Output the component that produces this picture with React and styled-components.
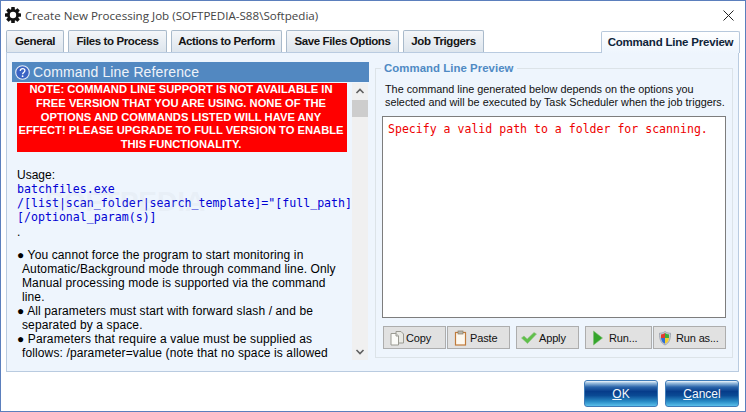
import React from "react";
import styled, { createGlobalStyle } from "styled-components";

const Global = createGlobalStyle`
  html, body { margin: 0; padding: 0; background: #fff; }
  * { box-sizing: border-box; }
`;
const Win = styled.div`
  width: 746px; height: 412px; border: 1px solid #5b7fbd; background: #fff;
  display: flex; flex-direction: column; overflow: hidden;
  font-family: "Liberation Sans", Arial, sans-serif; color: #000;
`;
const TitleBar = styled.div`
  height: 30px; flex: none; display: flex; align-items: center; padding: 0 11px 2px 4px;
`;
const AppIcon = styled.svg` width: 16px; height: 16px; flex: none; `;
const Title = styled.div`
  margin-left: 4px; flex: 1; font: 11.6px "Open Sans", sans-serif; color: #444; white-space: nowrap;
`;
const Close = styled.svg` width: 11px; height: 11px; flex: none; `;
const Tabs = styled.div`
  height: 21px; flex: none; display: flex; align-items: flex-end; padding: 0 5px 0 5px; gap: 4px; position: relative; z-index: 1;
`;
const Tab = styled.div`
  height: 22px; width: ${p => p.$w}px; flex: none; text-align: center; line-height: 20px;
  font-size: 11.5px; font-weight: 700; color: #141414; letter-spacing: -0.38px; white-space: nowrap;
  border: 1px solid #a9bacb; border-bottom: none; border-radius: 2px 2px 0 0;
  background: linear-gradient(#f4f6f9, #dde5ed);
  ${p => p.$active && `
    margin-left: auto; background: linear-gradient(#fff, #eef5fd); height: 22px; border-color: #b7c8dc;
    color: #10243a; margin-bottom: -1px; position: relative; letter-spacing: -0.2px;
  `}
`;
const Panel = styled.div`
  margin: 0 6px 0 5px; height: 320px; flex: none; border: 1px solid #b9cbe0; background: #eef5fd;
  display: flex; padding: 9px 5px 10px 5px; gap: 6px;
`;
const LeftCol = styled.div` width: 357px; flex: none; display: flex; flex-direction: column; `;
const RefHeader = styled.div`
  height: 20px; flex: none; background: #5288c1; color: #eef3f9; display: flex; align-items: center;
  padding-left: 3px; gap: 3px; font: 14px "Liberation Sans", sans-serif; letter-spacing: 0.12px;
`;
const RefBody = styled.div` flex: 1; display: flex; min-height: 0; margin-top: 1px; `;
const RefText = styled.div`
  width: 341px; padding-left: 5px; font-size: 12px; line-height: 14px; overflow: hidden; position: relative; height: 277px;
`;
const Warning = styled.div`
  width: 330px; height: 69px; background: #ff0000; color: #fff; font-weight: 700; font-size: 11.2px;
  line-height: 13.8px; text-align: center; padding: 0 2px 0 0;
`;
const Usage = styled.div` margin-top: 15px; padding-top: 1px; `;
const Mono = styled.div`
  font: 11.6px/14px "DejaVu Sans Mono", monospace; color: #0000d4; white-space: nowrap;
`;
const Dot = styled.div` margin: 1px 0 9px; `;
const Bullet = styled.div` width: 323px; padding-left: 5px; text-indent: -5px; letter-spacing: 0.12px; `;
const Watermark = styled.div`
  position: absolute; left: 33px; top: 103px; font: 700 28px "Liberation Sans", sans-serif;
  color: rgba(190, 200, 210, 0.14); pointer-events: none;
`;
const Scroll = styled.div`
  width: 16px; margin-left: -1px; height: 277px; background: #f0f0f0; display: flex; flex-direction: column; align-items: center;
`;
const Arrow = styled.svg` width: 16px; height: 17px; flex: none; `;
const Thumb = styled.div` width: 16px; height: 17px; background: #cdcdcd; flex: none; `;
const Gap = styled.div` flex: 1; `;
const RightGroup = styled.div`
  width: 358px; flex: none; margin: 6px 0 3px 0; border: 1px solid #dce3e8; position: relative; padding: 14px 6px 6px 6px;
  display: flex; flex-direction: column;
`;
const Legend = styled.div`
  position: absolute; left: 5px; top: -7px; padding: 0 3px; background: #eef5fd; color: #4f8ac4;
  font-size: 11.4px; font-weight: 700; line-height: 13px; letter-spacing: 0.05px; white-space: nowrap;
`;
const Desc = styled.div`
  font-size: 10.85px; line-height: 13px; padding-left: 3px; color: #111; white-space: nowrap;
`;
const Output = styled.div`
  margin-top: 7px; height: 202px; border: 1px solid #7d7d7d; background: #fff; padding: 5px 5px;
  font: 11.55px/14px "DejaVu Sans Mono", monospace; color: #ee0000; white-space: nowrap;
`;
const Actions = styled.div` margin-top: 8px; display: flex; gap: 1px; margin-left: 1px; `;
const ActionBtn = styled.div`
  width: ${p => p.$w}px; height: 23px; flex: none; margin-left: ${p => p.$ml || 0}px;
  background: #e1e1e1; border: 1px solid #adadad; display: flex; align-items: center; padding-left: ${p => p.$pl}px;
  gap: ${p => p.$gap}px; font-size: 11px; letter-spacing: -0.15px; color: #111;
`;
const BtnIcon = styled.svg` width: 16px; height: 16px; flex: none; `;
const Footer = styled.div`
  flex: 1; display: flex; justify-content: flex-end; align-items: flex-start; gap: 7px; padding: 8px 6px 0 0;
`;
const DlgBtn = styled.div`
  width: 74px; height: 27px; border: 1px solid #3f7cb8; border-radius: 3px; color: #f4f8fc; font-size: 12px;
  display: flex; align-items: center; justify-content: center;
  background: linear-gradient(#f3f8fd 0, #9cc0e0 8%, #2a64aa 24%, #063c8a 42%, #0a4a94 58%, #2a8cc6 82%, #5cc0ea 100%);
  u { text-underline-offset: 1px; }
`;

const Gear = () => (
  <AppIcon viewBox="0 0 16 16">
    <g fill="#111">
      {[0, 45, 90, 135].map(a => <rect key={a} x="6.2" y="0" width="3.6" height="16" rx=".6" transform={`rotate(${a} 8 8)`} />)}
      <circle cx="8" cy="8" r="6" />
    </g>
    <circle cx="8" cy="8" r="3.2" fill="#fff" />
  </AppIcon>
);
const Help = () => (
  <svg width="15" height="15" viewBox="0 0 15 15" style={{ flex: "none" }}>
    <circle cx="7.5" cy="7.5" r="6.8" fill="#3b63c4" stroke="#e6edf8" strokeWidth="1.1" />
    <path d="M5.2 5.8c.2-1.5 1.2-2.2 2.4-2.2 1.4 0 2.3.8 2.3 2 0 1.9-2.3 1.8-2.3 3.6" fill="none" stroke="#fff" strokeWidth="1.3" />
    <circle cx="7.6" cy="11.2" r=".9" fill="#fff" />
  </svg>
);
const CopyI = () => (
  <BtnIcon viewBox="0 0 16 16">
    <path d="M7 1.5h5l2.5 2.5v9H7z" fill="#e9e9e4" stroke="#9a9a92" />
    <path d="M2 3.5h5l2.5 2.5v9H2z" fill="#fbfbf8" stroke="#9a9a92" />
    <path d="M7 3.5V6h2.5" fill="#ddd" stroke="#9a9a92" />
  </BtnIcon>
);
const PasteI = () => (
  <BtnIcon viewBox="0 0 16 16">
    <rect x="2.5" y="2.5" width="10" height="12.5" fill="#fdf8ef" stroke="#c07a3a" strokeWidth="1.2" />
    <rect x="5" y="1" width="5" height="3" fill="#b8b8b0" stroke="#8a7a60" strokeWidth=".7" />
  </BtnIcon>
);
const CheckI = () => (
  <BtnIcon viewBox="0 0 16 16">
    <path d="M0.5 8l2.5-2 3.2 3L13 2.5l2.5 1.5-9 9.5z" fill="#5fc04a" stroke="#8fbf80" strokeWidth=".6" />
  </BtnIcon>
);
const PlayI = () => (
  <BtnIcon viewBox="0 0 16 16">
    <path d="M3.5 1v14L12.5 8z" fill="#35a52c" stroke="#7bc070" strokeWidth=".6" />
  </BtnIcon>
);
const ShieldI = () => (
  <BtnIcon viewBox="0 0 16 16">
    <path d="M8 1.5C6 3 4.2 3.2 2.5 3.2c0 6 1 9.5 5.5 11.8 4.500-2.300 5.500-5.800 5.500-11.800C11.800 3.200 10 3 8 1.500z" fill="#c8ccd4" stroke="#8c94a4" strokeWidth=".7" />
    <path d="M8 3C6.800 3.900 5.500 4.300 4 4.400V8h4z" fill="#e33b2e" />
    <path d="M8 3c1.200.9 2.500 1.300 4 1.400V8H8z" fill="#3fae3a" />
    <path d="M4 8h4v5.800C5.400 12.500 4.300 10.600 4 8z" fill="#2f6fd6" />
    <path d="M8 8h4c-.3 2.600-1.400 4.500-4 5.800z" fill="#f5cf2e" />
  </BtnIcon>
);

export default function App() {
  return (
    <Win>
      <Global />
      <TitleBar>
        <Gear />
        <Title>Create New Processing Job (SOFTPEDIA-S88\Softpedia)</Title>
        <Close viewBox="0 0 11 11"><path d="M.5.5l10 10M10.500.5l-10 10" stroke="#222" strokeWidth="1" /></Close>
      </TitleBar>
      <Tabs>
        <Tab $w={58}>General</Tab>
        <Tab $w={99}>Files to Process</Tab>
        <Tab $w={111}>Actions to Perform</Tab>
        <Tab $w={113}>Save Files Options</Tab>
        <Tab $w={81}>Job Triggers</Tab>
        <Tab $w={139} $active>Command Line Preview</Tab>
      </Tabs>
      <Panel>
        <LeftCol>
          <RefHeader><Help />Command Line Reference</RefHeader>
          <RefBody>
            <RefText>
              <Warning>
                NOTE: COMMAND LINE SUPPORT IS NOT AVAILABLE IN<br />
                FREE VERSION THAT YOU ARE USING. NONE OF THE<br />
                OPTIONS AND COMMANDS LISTED WILL HAVE ANY<br />
                EFFECT! PLEASE UPGRADE TO FULL VERSION TO ENABLE<br />
                THIS FUNCTIONALITY.
              </Warning>
              <Usage>Usage:</Usage>
              <Mono>batchfiles.exe</Mono>
              <Mono>/[list|scan_folder|search_template]="[full_path]</Mono>
              <Mono>[/optional_param(s)]</Mono>
              <Dot>.</Dot>
              <Bullet>● You cannot force the program to start monitoring in Automatic/Background mode through command line. Only Manual processing mode is supported via the command line.</Bullet>
              <Bullet>● All parameters must start with forward slash / and be separated by a space.</Bullet>
              <Bullet>● Parameters that require a value must be supplied as follows: /parameter=value (note that no space is allowed</Bullet>
              <Watermark>SOFTPEDIA</Watermark>
            </RefText>
            <Scroll>
              <Arrow viewBox="0 0 16 17"><path d="M4.500 10l3.500-3.500 3.500 3.500" fill="none" stroke="#606060" strokeWidth="1.600" /></Arrow>
              <Thumb />
              <Gap />
              <Arrow viewBox="0 0 16 17"><path d="M4.500 7l3.500 3.500 3.500-3.500" fill="none" stroke="#606060" strokeWidth="1.600" /></Arrow>
            </Scroll>
          </RefBody>
        </LeftCol>
        <RightGroup>
          <Legend>Command Line Preview</Legend>
          <Desc>The command line generated below depends on the options you<br />selected and will be executed by Task Scheduler when the job triggers.</Desc>
          <Output>Specify a valid path to a folder for scanning.</Output>
          <Actions>
            <ActionBtn $w={63} $pl={5} $gap={1}><CopyI />Copy</ActionBtn>
            <ActionBtn $w={63} $pl={5} $gap={1}><PasteI />Paste</ActionBtn>
            <ActionBtn $w={63} $ml={5} $pl={4} $gap={2}><CheckI />Apply</ActionBtn>
            <ActionBtn $w={67} $ml={5} $pl={4} $gap={3}><PlayI />Run...</ActionBtn>
            <ActionBtn $w={73} $pl={3} $gap={3}><ShieldI />Run as...</ActionBtn>
          </Actions>
        </RightGroup>
      </Panel>
      <Footer>
        <DlgBtn><u>O</u>K</DlgBtn>
        <DlgBtn><u>C</u>ancel</DlgBtn>
      </Footer>
    </Win>
  );
}
